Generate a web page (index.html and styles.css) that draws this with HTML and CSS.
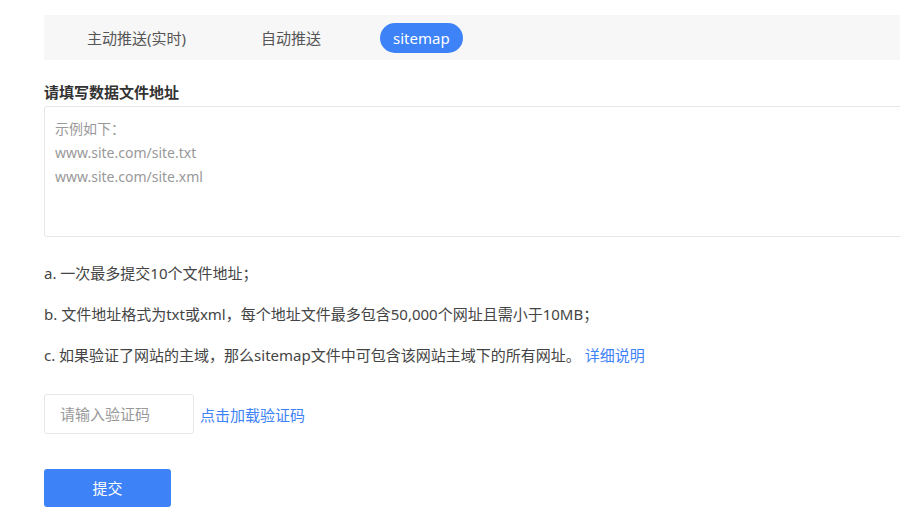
FILE: index.html
```html
<!DOCTYPE html>
<html lang="zh-CN">
<head>
<meta charset="utf-8">
<link rel="stylesheet" href="styles.css">
</head>
<body>
<div class="page">
  <div class="tabs">
    <span class="tab">主动推送(实时)</span>
    <span class="tab">自动推送</span>
    <span class="tab active">sitemap</span>
  </div>
  <div class="label">请填写数据文件地址</div>
  <div class="textarea">
    <div class="ph">示例如下：</div>
    <div class="ph">www.site.com/site.txt</div>
    <div class="ph">www.site.com/site.xml</div>
  </div>
  <ul class="notes">
    <li>a. 一次最多提交10个文件地址；</li>
    <li>b. 文件地址格式为txt或xml，每个地址文件最多包含50,000个网址且需小于10MB；</li>
    <li>c. 如果验证了网站的主域，那么sitemap文件中可包含该网站主域下的所有网址。 <a class="link">详细说明</a></li>
  </ul>
  <div class="captcha">
    <div class="input">请输入验证码</div>
    <a class="link big">点击加载验证码</a>
  </div>
  <div class="btn">提交</div>
</div>
</body>
</html>
```

FILE: styles.css
```css
html, body {
  margin: 0;
  padding: 0;
  background: #fff;
  overflow: hidden;
}
body {
  font-family: "Noto Sans", "Noto Sans CJK SC", sans-serif;
  color: #444;
}
.page {
  width: 1000px;
  padding: 15px 0 0 44px;
}
.tabs {
  display: flex;
  align-items: center;
  gap: 45px;
  height: 45px;
  padding-left: 28px;
  background: #f7f7f7;
}
.tab {
  height: 30px;
  line-height: 30px;
  padding: 0 15px;
  font-size: 15px;
  color: #555;
  border-radius: 15px;
}
.tab.active {
  padding: 0 13px;
  margin-left: -1px;
  background: #3d82f7;
  color: #fff;
}
.label {
  margin-top: 22px;
  font-size: 15px;
  font-weight: bold;
  color: #333;
  line-height: 20px;
}
.textarea {
  margin-top: 4px;
  height: 109px;
  border: 1px solid #e6e6e6;
  border-radius: 3px;
  padding: 10px 10px;
}
.ph {
  font-size: 14px;
  line-height: 24px;
  color: #999;
}
.notes {
  list-style: none;
  margin: 16px 0 0;
  padding: 0;
}
.notes li {
  font-size: 15px;
  line-height: 41px;
  color: #444;
}
.link {
  color: #3d82f7;
  text-decoration: none;
}
.captcha {
  margin-top: 18px;
  display: flex;
  align-items: center;
  gap: 6px;
}
.input {
  box-sizing: border-box;
  width: 150px;
  height: 40px;
  line-height: 38px;
  padding: 0 15px;
  border: 1px solid #e6e6e6;
  border-radius: 3px;
  font-size: 15px;
  color: #999;
}
.big {
  font-size: 15px;
}
.btn {
  margin-top: 35px;
  width: 127px;
  height: 38px;
  line-height: 38px;
  text-align: center;
  background: #3e82f8;
  color: #fff;
  font-size: 15px;
  border-radius: 3px;
}
```
